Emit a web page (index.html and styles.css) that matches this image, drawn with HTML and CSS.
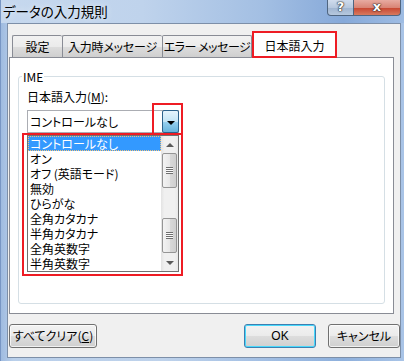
FILE: index.html
```html
<!DOCTYPE html>
<html lang="ja">
<head>
    <meta charset="UTF-8">
    <title>データの入力規則</title>
    <link rel="stylesheet" href="styles.css">
</head>
<body>
    <div class="window">
        <div class="titlebar">
            <span class="title">データの入力規則</span>
            <div class="caption">
                <div class="cap-btn help">?</div>
                <div class="cap-btn close">x</div>
            </div>
        </div>

        <div class="client">
            <div class="tabs">
                <div class="tab tab-1">設定</div>
                <div class="tab tab-2">入力時メッセージ</div>
                <div class="tab tab-3">エラー メッセージ</div>
                <div class="tab tab-4 active">日本語入力</div>
            </div>

            <div class="panel">
                <fieldset class="group">
                    <legend>IME</legend>
                    <div class="label">日本語入力(<u>M</u>):</div>

                    <div class="combo">
                        <div class="combo-text">コントロールなし</div>
                        <div class="combo-btn"><span class="tri-down"></span></div>
                    </div>

                    <div class="listbox">
                        <div class="items">
                            <div class="item selected">コントロールなし</div>
                            <div class="item">オン</div>
                            <div class="item">オフ (英語モード)</div>
                            <div class="item">無効</div>
                            <div class="item">ひらがな</div>
                            <div class="item">全角カタカナ</div>
                            <div class="item">半角カタカナ</div>
                            <div class="item">全角英数字</div>
                            <div class="item">半角英数字</div>
                        </div>
                        <div class="scrollbar">
                            <div class="sb-arrow"><span class="arrow-up"></span></div>
                            <div class="thumb"><span class="grip"></span></div>
                            <div class="sb-gap"></div>
                            <div class="thumb"><span class="grip"></span></div>
                            <div class="sb-fill"></div>
                            <div class="sb-arrow"><span class="arrow-down"></span></div>
                        </div>
                    </div>
                </fieldset>
            </div>

            <div class="footer">
                <div class="btn btn-clear">すべてクリア(<u>C</u>)</div>
                <div class="btn btn-ok">OK</div>
                <div class="btn btn-cancel">キャンセル</div>
            </div>
        </div>

        <!-- 赤枠の注釈 -->
        <div class="mark mark-tab"></div>
        <div class="mark mark-btn"></div>
        <div class="mark mark-list"></div>
    </div>
</body>
</html>
```

FILE: styles.css
```css
body {
    margin: 0;
    width: 404px;
    height: 361px;
    overflow: hidden;
    font-family: "Noto Sans CJK JP", sans-serif;
    font-size: 12px;
    line-height: 15px;
    font-feature-settings: "palt";
    color: #000;
}

.window {
    position: relative;
    width: 404px;
    height: 361px;
    box-sizing: border-box;
    display: flex;
    flex-direction: column;
    background: linear-gradient(to right, #9fbbe0 0%, #b9cfea 3%, #bed2eb 40%, #9dbbe2 70%, #8eb0dc 85%, #a9c4e7 100%);
    border-left: 1px solid #7896c4;
}

.titlebar {
    height: 23px;
    display: flex;
    align-items: flex-start;
    background: linear-gradient(to right, #c6d8ee 0%, #bfd3ec 35%, #a3bfe3 65%, #86a9d9 85%, #9ebce3 100%);
}

.title {
    padding: 3px 0 0 2px;
    font-size: 13.5px;
    line-height: 16px;
    white-space: nowrap;
    text-shadow: 0 0 6px rgba(255, 255, 255, 0.8);
}

.caption {
    display: flex;
    margin-left: auto;
    margin-right: 3px;
}

.cap-btn {
    height: 16px;
    box-sizing: border-box;
    border: 1px solid #4f6580;
    border-top: none;
    text-align: center;
    color: #fff;
    font-family: "DejaVu Sans", sans-serif;
    font-weight: bold;
    font-size: 13px;
    line-height: 13px;
    text-shadow: 0 0 1px #222, 0 0 1px #222, 0 0 2px #333;
}

.help {
    width: 27px;
    border-radius: 0 0 0 4px;
    background: linear-gradient(#d0dced 0%, #b7c8de 50%, #9fb4d0 51%, #b6c8de 100%);
}

.close {
    width: 47px;
    border-left: none;
    border-radius: 0 0 4px 0;
    background: linear-gradient(#e7aba1 0%, #d98576 50%, #c7442f 51%, #d77a5f 100%);
}

.client {
    flex: 1;
    margin: 0 3px 3px 6px;
    border: 1px solid #7d8fa8;
    background: #f0f0f0;
    display: flex;
    flex-direction: column;
}

.tabs {
    display: flex;
    align-items: flex-end;
    height: 25px;
    margin: 8px 0 0 4px;
    position: relative;
    z-index: 1;
}

.tab {
    height: 22px;
    box-sizing: border-box;
    border: 1px solid #898c95;
    border-bottom: none;
    border-right: none;
    border-radius: 2px 2px 0 0;
    background: linear-gradient(#f2f2f2, #ebebeb 50%, #dddddd 51%, #cfcfcf);
    text-align: center;
    line-height: 21px;
    white-space: nowrap;
    overflow: hidden;
}

.tab-1 { width: 50px; }
.tab-2 { width: 100px; letter-spacing: -0.2px; }
.tab-3 { width: 90px; letter-spacing: -0.5px; border-right: 1px solid #898c95; }

.tab.active {
    width: 85px;
    height: 26px;
    margin-bottom: -1px;
    border-right: 1px solid #898c95;
    background: #fff;
    line-height: 25px;
}

.panel {
    width: 385px;
    height: 257px;
    box-sizing: border-box;
    margin-left: 1px;
    border: 1px solid #898c95;
    background: #fff;
}

.group {
    width: 367px;
    height: 235px;
    box-sizing: border-box;
    min-width: 0;
    margin: 11px 0 0 8px;
    padding: 0 0 0 8px;
    border: 1px solid #d5dfe5;
    border-radius: 3px;
}

.group legend {
    margin-left: -5px;
    padding: 0 1px;
    line-height: 15px;
}

.label {
    margin-top: 5px;
}

.combo {
    display: flex;
    width: 152px;
    height: 23px;
    box-sizing: border-box;
    margin-top: 6px;
    border: 1px solid #abadb3;
    background: #fff;
}

.combo-text {
    flex: 1;
    padding-left: 2px;
    line-height: 21px;
}

.combo-btn {
    width: 17px;
    margin: -1px -1px -1px 0;
    box-sizing: border-box;
    border: 1px solid #2c628b;
    border-radius: 2px;
    background: linear-gradient(#e5f4fc 0%, #c4e5f6 50%, #98d1ef 51%, #68b3db 100%);
    display: flex;
    align-items: center;
    justify-content: center;
}

.tri-down {
    border-left: 4px solid transparent;
    border-right: 4px solid transparent;
    border-top: 4px solid #000;
    margin-top: 2px;
}

.listbox {
    display: flex;
    width: 152px;
    height: 137px;
    box-sizing: border-box;
    margin-top: 2px;
    border: 1px solid #707070;
    background: #fff;
}

.items {
    flex: 1;
}

.item {
    height: 15px;
    padding-left: 2px;
    line-height: 15px;
    white-space: nowrap;
}

.item.selected {
    background: #3399ff;
    color: #fff;
    outline: 1px dotted #f4c27a;
    outline-offset: -1px;
}

.scrollbar {
    width: 17px;
    display: flex;
    flex-direction: column;
    background: linear-gradient(to right, #e3e3e3, #f0f0f0 20%, #f0f0f0 80%, #e8e8e8);
}

.sb-arrow {
    height: 17px;
    display: flex;
    align-items: center;
    justify-content: center;
}

.arrow-up {
    border-left: 4px solid transparent;
    border-right: 4px solid transparent;
    border-bottom: 4px solid #5a5a5a;
}

.arrow-down {
    border-left: 4px solid transparent;
    border-right: 4px solid transparent;
    border-top: 4px solid #5a5a5a;
}

.thumb {
    height: 35px;
    margin: 0 1px;
    box-sizing: border-box;
    border: 1px solid #959595;
    border-radius: 2px;
    background: linear-gradient(to right, #f3f3f3, #e8e8e8 50%, #d9d9d9 51%, #cfcfcf);
    display: flex;
    align-items: center;
    justify-content: center;
}

.grip {
    width: 7px;
    height: 7px;
    background: repeating-linear-gradient(#6f6f6f 0, #6f6f6f 1px, #fafafa 1px, #fafafa 2px);
}

.sb-gap {
    height: 30px;
}

.sb-fill {
    flex: 1;
}

.footer {
    display: flex;
    gap: 12px;
    margin: 10px 0 0 1px;
}

.btn {
    height: 24px;
    box-sizing: border-box;
    border: 1px solid #707070;
    border-radius: 3px;
    background: linear-gradient(#f2f2f2, #ebebeb 50%, #dddddd 51%, #cfcfcf);
    box-shadow: inset 0 0 0 1px rgba(255, 255, 255, 0.7);
    text-align: center;
    line-height: 22px;
}

.btn-clear {
    width: 88px;
    margin-right: auto;
}

.btn-ok {
    width: 72px;
    border-color: #3c7fb1;
    box-shadow: inset 0 0 0 1px #48d8fb;
    font-family: "Liberation Sans", "Noto Sans CJK JP", sans-serif;
}

.btn-cancel {
    width: 72px;
}

.mark {
    position: absolute;
    box-sizing: border-box;
    border: 2px solid #ee1c24;
    z-index: 5;
}

.mark-tab {
    left: 251px;
    top: 31px;
    width: 85px;
    height: 27px;
}

.mark-btn {
    left: 151px;
    top: 103px;
    width: 31px;
    height: 32px;
}

.mark-list {
    left: 21px;
    top: 133px;
    width: 161px;
    height: 143px;
}
```
